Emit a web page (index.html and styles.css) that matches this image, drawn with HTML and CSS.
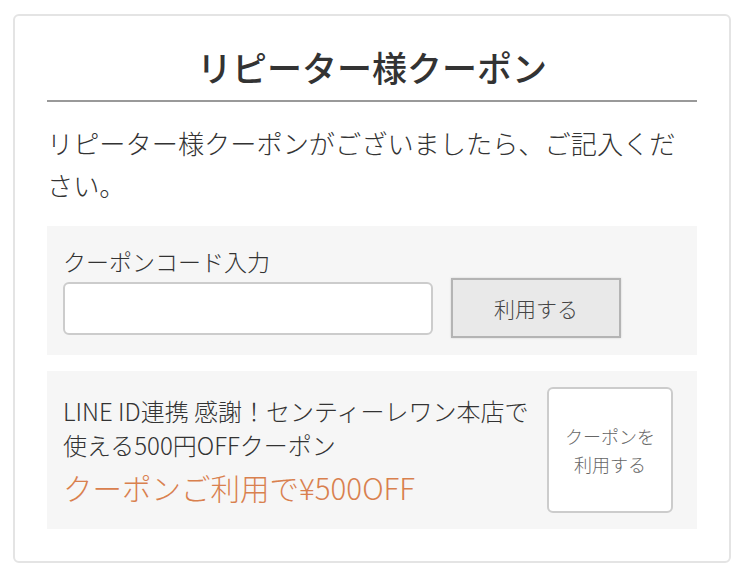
FILE: index.html
```html
<!DOCTYPE html>
<html lang="ja">
<head>
    <meta charset="UTF-8">
    <meta name="viewport" content="width=device-width, initial-scale=1.0">
    <title>リピーター様クーポン</title>
    <link rel="stylesheet" href="styles.css">
</head>
<body>

<div class="card">
    <h2 class="title">リピーター様クーポン</h2>

    <p class="lead">リピーター様クーポンがございましたら、ご記入ください。</p>

    <div class="panel code-panel">
        <label for="coupon_code">クーポンコード入力</label>
        <div class="code-row">
            <input type="text" id="coupon_code">
            <button class="apply-btn">利用する</button>
        </div>
    </div>

    <div class="panel offer-panel">
        <div class="offer-text">
            <p class="offer-name">LINE ID連携 感謝！センティーレワン本店で使える500円OFFクーポン</p>
            <p class="offer-price">クーポンご利用で¥500OFF</p>
        </div>
        <button class="offer-btn">クーポンを<br>利用する</button>
    </div>
</div>

</body>
</html>
```

FILE: styles.css
```css
body {
    font-family: "Noto Sans CJK JP", "Noto Sans", sans-serif;
    background-color: #fff;
    color: #333;
    margin: 0;
    padding: 14px 15px 15px 13px;
}

.card {
    border: 2px solid #e4e4e4;
    border-radius: 6px;
    padding: 0 32px 32px;
}

.title {
    margin: 0;
    padding: 26px 0 8px;
    font-size: 35px;
    line-height: 50px;
    font-weight: 500;
    text-align: center;
    color: #333;
    border-bottom: 2px solid #999;
}

.lead {
    margin: 20px 0;
    font-size: 26.2px;
    line-height: 42px;
    font-weight: 300;
    color: #333;
}

.panel {
    background-color: #f6f6f6;
}

.code-panel {
    padding: 20px 16px 17px;
}

.code-panel label {
    display: block;
    font-size: 23px;
    line-height: 30px;
    font-weight: 300;
    color: #333;
    margin-bottom: 2px;
}

.code-row {
    display: flex;
    align-items: center;
    gap: 18px;
}

.code-row input {
    width: 370px;
    height: 53px;
    box-sizing: border-box;
    border: 2px solid #ccc;
    border-radius: 6px;
    background-color: #fff;
}

.apply-btn {
    width: 170px;
    height: 60px;
    background-color: #e9e9e9;
    border: 2px solid #b4b4b4;
    box-shadow: 0 0 2px rgba(0, 0, 0, 0.15);
    font-family: inherit;
    font-size: 21px;
    font-weight: 300;
    color: #444;
    padding: 0;
}

.offer-panel {
    margin-top: 16px;
    padding: 16px 24px 16px 16px;
    display: flex;
    align-items: center;
    gap: 12px;
}

.offer-text {
    flex: 1;
}

.offer-text p {
    margin: 0;
}

.offer-name {
    font-size: 24px;
    line-height: 34px;
    font-weight: 300;
    color: #333;
}

.offer-price {
    margin-top: 5px !important;
    font-size: 29.5px;
    line-height: 40px;
    font-weight: 300;
    color: #d9804e;
}

.offer-btn {
    width: 126px;
    height: 126px;
    flex-shrink: 0;
    background-color: #fff;
    border: 2px solid #ccc;
    border-radius: 6px;
    font-family: inherit;
    font-size: 18px;
    line-height: 28px;
    font-weight: 300;
    color: #666;
    padding: 0;
}
```
